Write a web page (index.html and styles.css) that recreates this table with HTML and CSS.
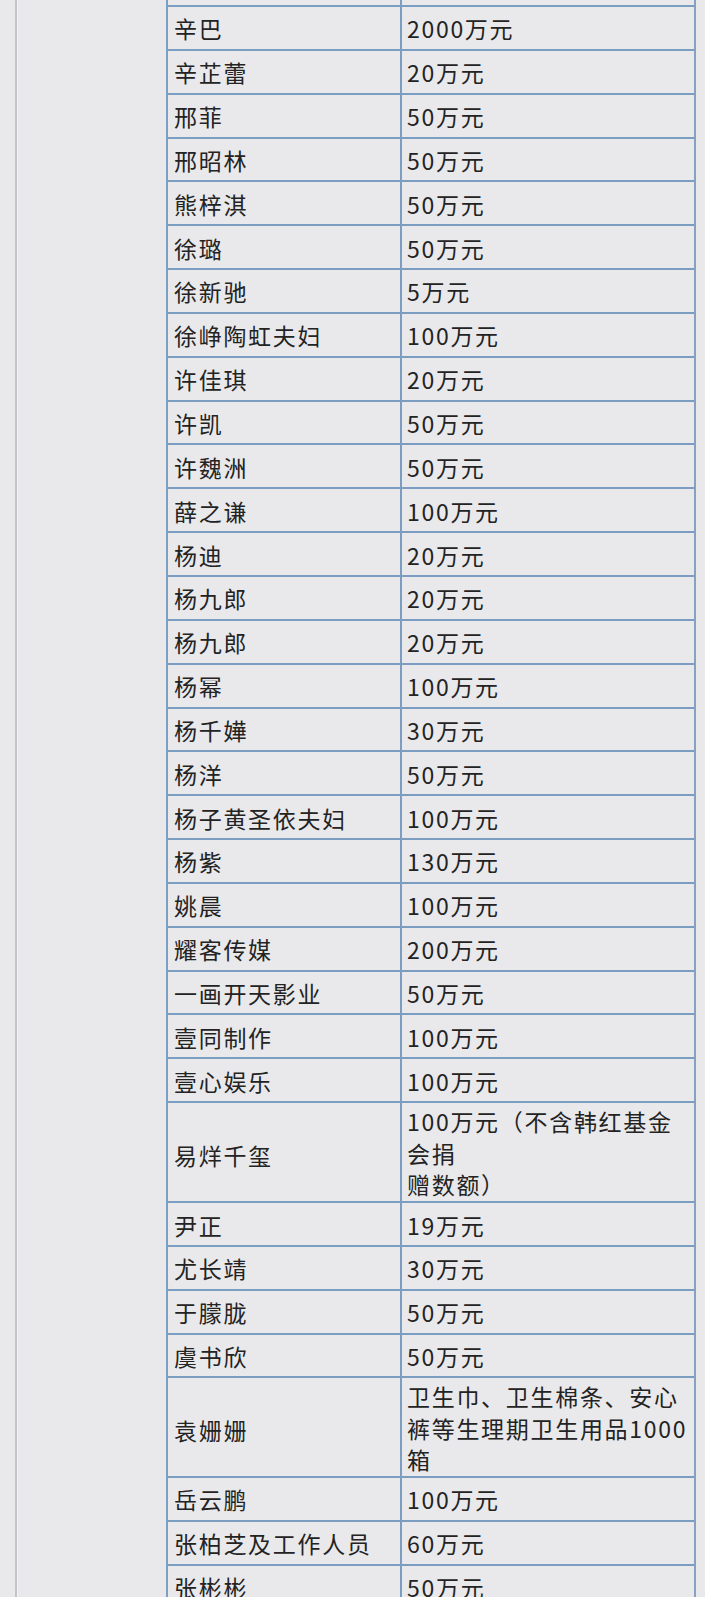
FILE: index.html
```html
<!DOCTYPE html>
<html lang="zh-CN">
<head>
<meta charset="utf-8">
<title>捐赠名单</title>
<link rel="stylesheet" href="styles.css">
</head>
<body>
<div class="page">
  <div class="rule"></div>
  <div class="tbl">
    <div class="row cut"><div class="name"></div><div class="amt"></div></div>
    <div class="row"><div class="name">辛巴</div><div class="amt">2000万元</div></div>
    <div class="row"><div class="name">辛芷蕾</div><div class="amt">20万元</div></div>
    <div class="row"><div class="name">邢菲</div><div class="amt">50万元</div></div>
    <div class="row"><div class="name">邢昭林</div><div class="amt">50万元</div></div>
    <div class="row"><div class="name">熊梓淇</div><div class="amt">50万元</div></div>
    <div class="row"><div class="name">徐璐</div><div class="amt">50万元</div></div>
    <div class="row"><div class="name">徐新驰</div><div class="amt">5万元</div></div>
    <div class="row"><div class="name">徐峥陶虹夫妇</div><div class="amt">100万元</div></div>
    <div class="row"><div class="name">许佳琪</div><div class="amt">20万元</div></div>
    <div class="row"><div class="name">许凯</div><div class="amt">50万元</div></div>
    <div class="row"><div class="name">许魏洲</div><div class="amt">50万元</div></div>
    <div class="row"><div class="name">薛之谦</div><div class="amt">100万元</div></div>
    <div class="row"><div class="name">杨迪</div><div class="amt">20万元</div></div>
    <div class="row"><div class="name">杨九郎</div><div class="amt">20万元</div></div>
    <div class="row"><div class="name">杨九郎</div><div class="amt">20万元</div></div>
    <div class="row"><div class="name">杨幂</div><div class="amt">100万元</div></div>
    <div class="row"><div class="name">杨千嬅</div><div class="amt">30万元</div></div>
    <div class="row"><div class="name">杨洋</div><div class="amt">50万元</div></div>
    <div class="row"><div class="name">杨子黄圣依夫妇</div><div class="amt">100万元</div></div>
    <div class="row"><div class="name">杨紫</div><div class="amt">130万元</div></div>
    <div class="row"><div class="name">姚晨</div><div class="amt">100万元</div></div>
    <div class="row"><div class="name">耀客传媒</div><div class="amt">200万元</div></div>
    <div class="row"><div class="name">一画开天影业</div><div class="amt">50万元</div></div>
    <div class="row"><div class="name">壹同制作</div><div class="amt">100万元</div></div>
    <div class="row"><div class="name">壹心娱乐</div><div class="amt">100万元</div></div>
    <div class="row multi r100"><div class="name">易烊千玺</div><div class="amt">100万元（不含韩红基金<br>会捐<br>赠数额）</div></div>
    <div class="row"><div class="name">尹正</div><div class="amt">19万元</div></div>
    <div class="row"><div class="name">尤长靖</div><div class="amt">30万元</div></div>
    <div class="row"><div class="name">于朦胧</div><div class="amt">50万元</div></div>
    <div class="row"><div class="name">虞书欣</div><div class="amt">50万元</div></div>
    <div class="row multi r99"><div class="name">袁姗姗</div><div class="amt">卫生巾、卫生棉条、安心<br>裤等生理期卫生用品1000<br>箱</div></div>
    <div class="row"><div class="name">岳云鹏</div><div class="amt">100万元</div></div>
    <div class="row"><div class="name">张柏芝及工作人员</div><div class="amt">60万元</div></div>
    <div class="row"><div class="name">张彬彬</div><div class="amt">50万元</div></div>
  </div>
</div>
</body>
</html>
```

FILE: styles.css
```css
html, body {
  margin: 0;
  padding: 0;
  background: #e9e9ec;
}

.page {
  display: flex;
  align-items: stretch;
  min-height: 1597px;
  height: 1597px;
  overflow: hidden;
}

.rule {
  width: 2px;
  margin-left: 15px;
  background: #c2c2c7;
  box-shadow: 1px 0 0 #f3f3f5;
  flex: none;
}

.tbl {
  margin-left: 149px;
  width: 530px;
  box-sizing: border-box;
  border-left: 2px solid #7d9fc3;
  border-right: 2px solid #86a2c0;
  flex: none;
  align-self: flex-start;
  font-family: "Noto Sans CJK SC", "Noto Sans", sans-serif;
  font-size: 23px;
  letter-spacing: 1.7px;
  color: #232323;
}

.row {
  display: grid;
  grid-template-columns: 234px 1fr;
  height: 43.85px;
  box-sizing: border-box;
  border-bottom: 2px solid #7b9dc2;
}

.row.cut {
  height: 7px;
}

.row.r100 {
  height: 100px;
}

.row.r99 {
  height: 99.5px;
}

.name, .amt {
  display: flex;
  align-items: center;
  line-height: 31px;
  white-space: nowrap;
  padding-top: 2px;
  box-sizing: border-box;
}

.name {
  padding-left: 6px;
  border-right: 2px solid #7b9dc2;
}

.amt {
  padding-left: 5px;
}

.multi .amt {
  align-items: flex-start;
  padding-top: 3px;
  line-height: 31.5px;
}

.multi .name {
  padding-top: 6px;
}
```
